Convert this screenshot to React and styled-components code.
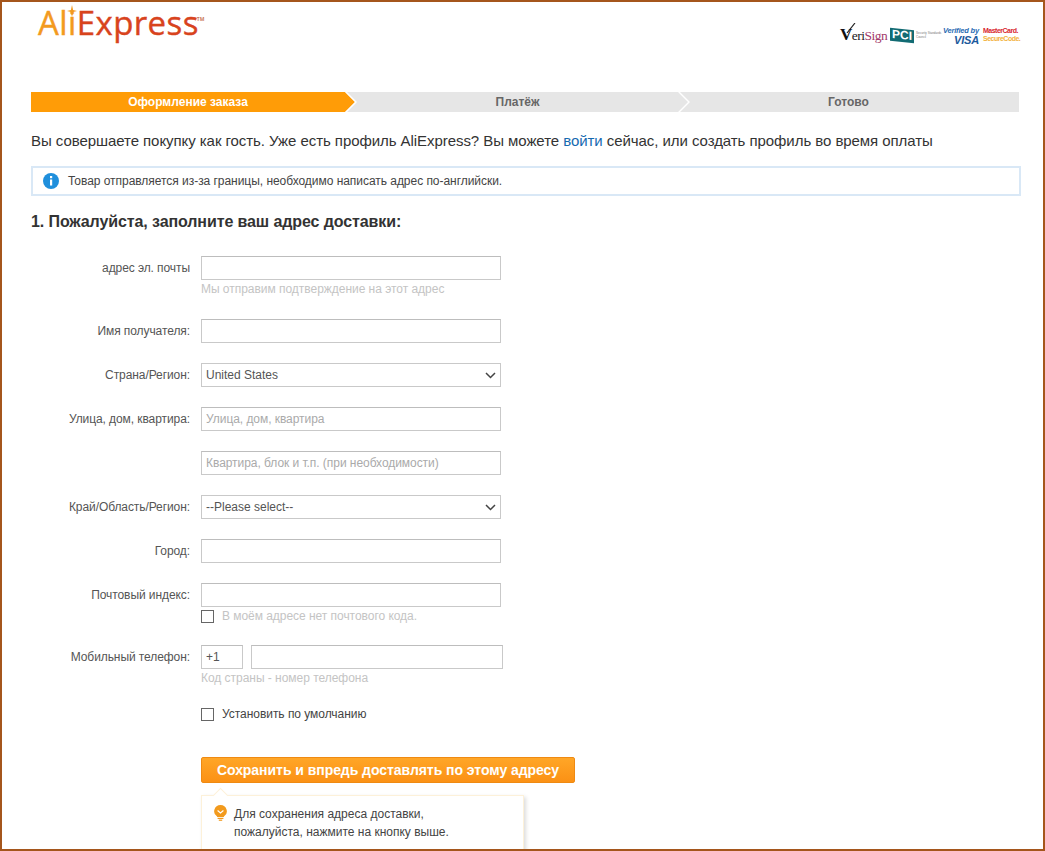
import React from "react";
import styled, { createGlobalStyle } from "styled-components";

const Global = createGlobalStyle`
  html, body { margin: 0; padding: 0; background: #fff; }
  body { font-family: "Liberation Sans", Arial, sans-serif; }
`;

const Frame = styled.div`
  box-sizing: border-box;
  width: 1045px;
  height: 851px;
  border: 2px solid #a5561c;
  overflow: hidden;
  padding: 0 24px 0 29px;
  background: #fff;
`;

const Header = styled.header`
  display: flex;
  justify-content: space-between;
  height: 90px;
  margin-right: -2px;
`;

const Logo = styled.div`
  position: relative;
  display: flex;
  align-items: flex-start;
  height: 44px;
  margin-left: 7px;
  padding-top: 3px;
  font-family: "Open Sans", sans-serif;
  font-size: 33px;
  line-height: 36px;
  letter-spacing: 0.4px;
  -webkit-text-stroke: 0.4px currentColor;
  color: #d8431d;
`;

const LogoAli = styled.span`
  color: #f39a1f;
`;

const LogoStar = styled.svg`
  position: absolute;
  left: 29px;
  top: 3px;
  width: 10px;
  height: 12px;
`;

const Tm = styled.span`
  margin: 9px 0 0 -2px;
  font-size: 5px;
  line-height: 10px;
  letter-spacing: 0;
  font-weight: 700;
  -webkit-text-stroke: 0;
  color: #c9795a;
`;

const Badges = styled.div`
  display: flex;
  align-items: center;
  height: 22px;
  margin-top: 22px;
`;

const VeriSign = styled.div`
  position: relative;
  display: flex;
  align-items: baseline;
  width: 50px;
  font-family: "Liberation Serif", serif;
  font-size: 13.5px;
  letter-spacing: -0.5px;
  white-space: nowrap;
  color: #a33a6c;
  b { color: #111; font-size: 17px; font-weight: 700; }
  i { color: #222; font-style: normal; }
  svg { position: absolute; left: 6px; top: -2px; }
`;

const PciBox = styled.div`
  display: flex;
  align-items: center;
  gap: 2px;
  width: 53px;
  font-size: 3px;
  line-height: 4px;
  color: #777;
  b {
    display: block;
    padding: 0 2px;
    background: #126b73;
    color: #fff;
    font-size: 12px;
    line-height: 13px;
    transform: skewY(6deg);
  }
`;

const Visa = styled.div`
  width: 40px;
  font-size: 7.5px;
  line-height: 9px;
  font-style: italic;
  font-weight: 700;
  letter-spacing: -0.2px;
  white-space: nowrap;
  color: #2a6cb3;
  b { display: block; padding-left: 11px; font-size: 11px; line-height: 10px; color: #1c5a9c; }
`;

const SecureCode = styled.div`
  width: 38px;
  font-size: 7px;
  line-height: 8px;
  font-weight: 700;
  letter-spacing: -0.5px;
  white-space: nowrap;
  color: #d8262f;
  b { display: block; color: #f2b13c; }
`;

const Steps = styled.div`
  display: flex;
  width: 988px;
  height: 20px;
`;

const Step = styled.div`
  position: relative;
  box-sizing: border-box;
  flex: 0 0 ${(p) => p.$width}px;
  padding-left: ${(p) => p.$offset || 0}px;
  background: ${(p) => (p.$active ? "#ff9c07" : "#e6e6e6")};
  color: ${(p) => (p.$active ? "#fff" : "#666")};
  font-size: 12px;
  font-weight: 700;
  line-height: 20px;
  text-align: center;
  &::before {
    content: "";
    display: ${(p) => (p.$last ? "none" : "block")};
    position: absolute;
    z-index: 1;
    right: -10px;
    top: 0;
    width: 10px;
    height: 20px;
    background: ${(p) => (p.$active ? "#ff9c07" : "#e6e6e6")};
    clip-path: polygon(0 0, 100% 50%, 0 100%);
  }
  &::after {
    content: "";
    display: ${(p) => (p.$last ? "none" : "block")};
    position: absolute;
    z-index: 2;
    right: -12px;
    top: 0;
    width: 12px;
    height: 20px;
    background: #fff;
    clip-path: polygon(0 0, 2px 0, 100% 50%, 2px 100%, 0 100%, 10px 50%);
  }
`;

const Intro = styled.p`
  margin: 20px 0 0;
  font-size: 15px;
  line-height: 18px;
  letter-spacing: -0.06px;
  white-space: nowrap;
  color: #333;
  a { color: #1569b0; text-decoration: none; }
`;

const Notice = styled.div`
  display: flex;
  align-items: center;
  gap: 9px;
  box-sizing: border-box;
  width: 990px;
  height: 30px;
  margin-top: 16px;
  padding-left: 10px;
  border: 2px solid #d9e8f6;
  font-size: 12px;
  letter-spacing: -0.04px;
  color: #444;
`;

const Heading = styled.h2`
  margin: 16px 0 0;
  font-size: 16px;
  line-height: 20px;
  font-weight: 700;
  letter-spacing: -0.1px;
  color: #333;
`;

const Form = styled.div`
  display: flex;
  flex-direction: column;
  margin-top: 24px;
`;

const Row = styled.div`
  display: grid;
  grid-template-columns: 159px 1fr;
  column-gap: 11px;
  margin-bottom: ${(p) => p.$gap}px;
`;

const Label = styled.label`
  font-size: 12px;
  line-height: 24px;
  letter-spacing: -0.08px;
  text-align: right;
  color: #555;
`;

const Field = styled.div`
  display: flex;
  flex-direction: column;
  align-items: flex-start;
`;

const Input = styled.input`
  box-sizing: border-box;
  display: block;
  width: ${(p) => p.$width || 300}px;
  height: 24px;
  padding: 0 4px;
  border: 1px solid #c9c9c9;
  border-top-color: #bdbdbd;
  border-radius: 0;
  outline: none;
  font-family: "Liberation Sans", Arial, sans-serif;
  font-size: 12px;
  letter-spacing: -0.05px;
  color: #555;
  background: #fff;
  &::placeholder { color: #aaa; opacity: 1; }
`;

const SelectBox = styled.div`
  box-sizing: border-box;
  display: flex;
  align-items: center;
  justify-content: space-between;
  width: 300px;
  height: 24px;
  padding: 0 4px;
  border: 1px solid #c9c9c9;
  font-size: 12px;
  color: #555;
`;

const Hint = styled.div`
  margin-top: 2px;
  font-size: 12px;
  line-height: 14px;
  letter-spacing: -0.03px;
  color: #c4c4c4;
`;

const PhoneRow = styled.div`
  display: flex;
  gap: 8px;
`;

const Check = styled.label`
  display: flex;
  align-items: center;
  gap: 8px;
  height: 14px;
  margin-top: ${(p) => p.$top || 0}px;
  font-size: 12px;
  letter-spacing: -0.04px;
  color: ${(p) => (p.$muted ? "#c4c4c4" : "#444")};
`;

const Box = styled.span`
  box-sizing: border-box;
  display: block;
  width: 13px;
  height: 13px;
  border: 1px solid #666;
  background: #fff;
`;

const SaveButton = styled.button`
  box-sizing: border-box;
  display: block;
  width: 374px;
  height: 26px;
  margin-top: 36px;
  padding: 0;
  border: 1px solid #ef8a12;
  border-radius: 2px;
  background: linear-gradient(#ffa627, #fb9115);
  color: #fff;
  font-family: "Liberation Sans", Arial, sans-serif;
  font-size: 14px;
  font-weight: 700;
  letter-spacing: -0.05px;
`;

const Tip = styled.div`
  position: relative;
  display: flex;
  gap: 7px;
  box-sizing: border-box;
  width: 323px;
  height: 70px;
  margin: 12px 0 0 0;
  padding: 9px 10px 0 12px;
  background: #fff;
  border: 1px solid #fdf1d9;
  box-shadow: 2px 2px 4px rgba(0, 0, 0, 0.14);
  font-size: 12px;
  line-height: 18px;
  color: #444;
  &::before {
    content: "";
    position: absolute;
    left: 13px;
    top: -6px;
    width: 10px;
    height: 10px;
    background: #fff;
    border-left: 1px solid #fdf1d9;
    border-top: 1px solid #fdf1d9;
    transform: rotate(45deg);
  }
`;

const Chevron = () => (
  <svg width="11" height="7" viewBox="0 0 11 7" fill="none">
    <path d="M1 1l4.500 4.500L10 1" stroke="#444" strokeWidth="1.5" />
  </svg>
);

const InfoIcon = () => (
  <svg width="16" height="16" viewBox="0 0 16 16">
    <circle cx="8" cy="8" r="8" fill="#1f8fdc" />
    <rect x="7" y="3" width="2.2" height="2.2" fill="#fff" />
    <rect x="7" y="6.5" width="2.2" height="6" fill="#fff" />
  </svg>
);

const BulbIcon = () => (
  <svg width="13" height="16" viewBox="0 0 13 16" style={{ flex: "none" }}>
    <path d="M6.500 0a6.300 6.300 0 0 1 3.400 11.600V12H3.100v-.4A6.300 6.300 0 0 1 6.500 0z" fill="#f29a1d" />
    <path d="M3.600 5.500l2.900 2.400 2.900-2.400" stroke="#fff" strokeWidth="1.2" fill="none" />
    <rect x="3.600" y="12.800" width="5.800" height="1.200" fill="#f29a1d" />
    <rect x="4.800" y="14.600" width="3.400" height="1.200" fill="#f29a1d" />
  </svg>
);

export default function App() {
  return (
    <>
      <Global />
      <Frame>
        <Header>
          <Logo>
            <LogoAli>Ali</LogoAli>Express
            <Tm>TM</Tm>
            <LogoStar viewBox="0 0 10 12">
              <path d="M5 0l1.100 4.900L10 6 6.100 7.100 5 12 3.900 7.100 0 6l3.900-1.100z" fill="#f39a1f" />
            </LogoStar>
          </Logo>
          <Badges>
            <VeriSign>
              <b>V</b>
              <i>eri</i>Sign
              <svg width="10" height="10" viewBox="0 0 10 10">
                <path d="M1 10L9 0" stroke="#222" strokeWidth="1.2" />
              </svg>
            </VeriSign>
            <PciBox>
              <b>PCI</b>
              <span>Security Standards Council</span>
            </PciBox>
            <Visa>
              Verified by
              <b>VISA</b>
            </Visa>
            <SecureCode>
              MasterCard.
              <b>SecureCode.</b>
            </SecureCode>
          </Badges>
        </Header>

        <Steps>
          <Step $active $width={314}>Оформление заказа</Step>
          <Step $width={333} $offset={12}>Платёж</Step>
          <Step $last $width={341}>Готово</Step>
        </Steps>

        <Intro>
          Вы совершаете покупку как гость. Уже есть профиль AliExpress? Вы можете <a href="#">войти</a> сейчас, или создать профиль во время оплаты
        </Intro>

        <Notice>
          <InfoIcon />
          Товар отправляется из-за границы, необходимо написать адрес по-английски.
        </Notice>

        <Heading>1. Пожалуйста, заполните ваш адрес доставки:</Heading>

        <Form>
          <Row $gap={23}>
            <Label>адрес эл. почты</Label>
            <Field>
              <Input />
              <Hint>Мы отправим подтверждение на этот адрес</Hint>
            </Field>
          </Row>
          <Row $gap={20}>
            <Label>Имя получателя:</Label>
            <Field><Input /></Field>
          </Row>
          <Row $gap={20}>
            <Label>Страна/Регион:</Label>
            <Field>
              <SelectBox>United States<Chevron /></SelectBox>
            </Field>
          </Row>
          <Row $gap={20}>
            <Label>Улица, дом, квартира:</Label>
            <Field><Input placeholder="Улица, дом, квартира" /></Field>
          </Row>
          <Row $gap={20}>
            <span />
            <Field><Input placeholder="Квартира, блок и т.п. (при необходимости)" /></Field>
          </Row>
          <Row $gap={20}>
            <Label>Край/Область/Регион:</Label>
            <Field>
              <SelectBox>--Please select--<Chevron /></SelectBox>
            </Field>
          </Row>
          <Row $gap={20}>
            <Label>Город:</Label>
            <Field><Input /></Field>
          </Row>
          <Row $gap={22}>
            <Label>Почтовый индекс:</Label>
            <Field>
              <Input />
              <Check $muted $top={2}><Box />В моём адресе нет почтового кода.</Check>
            </Field>
          </Row>
          <Row $gap={0}>
            <Label>Мобильный телефон:</Label>
            <Field>
              <PhoneRow>
                <Input $width={42} defaultValue="+1" />
                <Input $width={252} />
              </PhoneRow>
              <Hint>Код страны - номер телефона</Hint>
              <Check $top={22}><Box />Установить по умолчанию</Check>
              <SaveButton>Сохранить и впредь доставлять по этому адресу</SaveButton>
              <Tip>
                <BulbIcon />
                <div>
                  Для сохранения адреса доставки,
                  <br />
                  пожалуйста, нажмите на кнопку выше.
                </div>
              </Tip>
            </Field>
          </Row>
        </Form>
      </Frame>
    </>
  );
}
